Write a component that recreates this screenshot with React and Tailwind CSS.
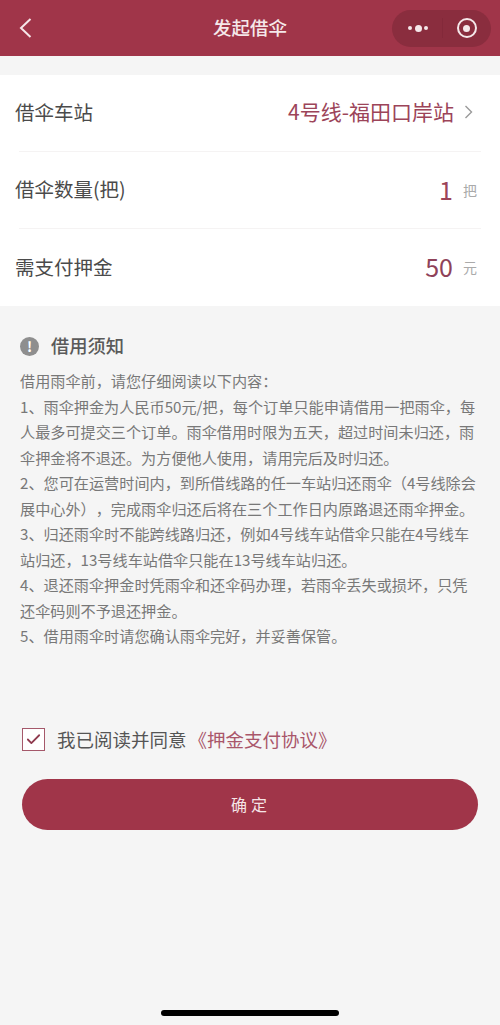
import React from 'react'
import { Check } from 'lucide-react'

const font = { fontFamily: '"Noto Sans CJK SC", "Noto Sans", sans-serif' }

const notice = [
  '借用雨伞前，请您仔细阅读以下内容：',
  '1、雨伞押金为人民币50元/把，每个订单只能申请借用一把雨伞，每',
  '人最多可提交三个订单。雨伞借用时限为五天，超过时间未归还，雨',
  '伞押金将不退还。为方便他人使用，请用完后及时归还。',
  '2、您可在运营时间内，到所借线路的任一车站归还雨伞（4号线除会',
  '展中心外），完成雨伞归还后将在三个工作日内原路退还雨伞押金。',
  '3、归还雨伞时不能跨线路归还，例如4号线车站借伞只能在4号线车',
  '站归还，13号线车站借伞只能在13号线车站归还。',
  '4、退还雨伞押金时凭雨伞和还伞码办理，若雨伞丢失或损坏，只凭',
  '还伞码则不予退还押金。',
  '5、借用雨伞时请您确认雨伞完好，并妥善保管。',
]

const Row = ({ label, children, border }) => (
  <div className={`h-[77px] flex items-center justify-between ${border ? 'border-b border-[#f5f3f3]' : ''}`}>
    <span className="text-[19.5px] text-[#4a4a4a] -ml-[4px] -mt-[2px]">{label}</span>
    {children}
  </div>
)

const App = () => {
  return (
    <div className="w-[500px] h-[1025px] bg-[#f5f5f5] relative overflow-hidden" style={font}>
      {/* Header */}
      <header className="h-[56px] bg-[#a03549] flex items-center justify-between pl-[19px] pr-[9px] relative">
        <svg width="13" height="20" viewBox="0 0 13 20" fill="none" stroke="#f6e6e9" strokeWidth="2" className="-mt-[1px]">
          <path d="M11.5 1 L2 10 L11.5 19" />
        </svg>
        <h1 className="absolute left-0 right-0 text-center text-[18.5px] font-medium text-[#f5e8ea] pointer-events-none">发起借伞</h1>
        <div className="w-[99px] h-[37px] rounded-full bg-[#8a2d3e] flex items-center">
          <div className="w-[50px] flex items-center justify-center gap-[2.5px] pl-[2px]">
            <span className="w-[4px] h-[4px] rounded-full bg-[#f5e8ea]" />
            <span className="w-[7px] h-[7px] rounded-full bg-[#f5e8ea]" />
            <span className="w-[4px] h-[4px] rounded-full bg-[#f5e8ea]" />
          </div>
          <div className="w-px h-[20px] bg-[#83293a]" />
          <div className="flex-1 flex items-center justify-center pr-[1px]">
            <div className="w-[20px] h-[20px] rounded-full border-2 border-[#f5e8ea] flex items-center justify-center">
              <span className="w-[7px] h-[7px] rounded-full bg-[#f5e8ea]" />
            </div>
          </div>
        </div>
      </header>

      {/* Form */}
      <section className="mt-[19px] bg-white h-[231px] px-[19px]">
        <Row label="借伞车站" border>
          <div className="flex items-center mr-[8px]">
            <span className="text-[21px] text-[#9c4459] -mt-[2px] whitespace-nowrap">4号线-福田口岸站</span>
            <svg width="9" height="14" viewBox="0 0 9 14" fill="none" stroke="#9a9a9a" strokeWidth="1.4" className="ml-[10px] -mt-[2px]">
              <path d="M1.5 1 L7.5 7 L1.5 13" />
            </svg>
          </div>
        </Row>
        <Row label="借伞数量(把)" border>
          <div className="flex items-center">
            <span className="text-[25px] leading-none text-[#9c4459] -mt-[1px]">1</span>
            <span className="w-[14px] text-[14px] text-[#aaaaaa] ml-[10px] mr-[4px]">把</span>
          </div>
        </Row>
        <Row label="需支付押金">
          <div className="flex items-center">
            <span className="text-[25px] leading-none text-[#8f4259] -mt-[2px]">50</span>
            <span className="w-[14px] text-[14px] text-[#aaaaaa] ml-[10px] mr-[4px]">元</span>
          </div>
        </Row>
      </section>

      {/* Notice */}
      <section className="pl-[20px] pt-[27px]">
        <div className="flex items-center gap-[12px] h-[26px]">
          <span className="w-[19px] h-[19px] rounded-full bg-[#8e8e8e] text-white text-[14px] font-bold leading-none flex items-center justify-center">!</span>
          <h2 className="text-[18.3px] font-medium text-[#5a5a5a]">借用须知</h2>
        </div>
        <div className="mt-[9px] text-[15.15px] leading-[25.5px] text-[#787878] [text-spacing-trim:space-all]">
          {notice.map((line) => (
            <p key={line} className="whitespace-nowrap">{line}</p>
          ))}
        </div>
      </section>

      {/* Agreement */}
      <div className="flex items-center ml-[22px] mt-[77px]">
        <div className="w-[23px] h-[23px] border border-[#a5586a] bg-white flex items-center justify-center">
          <Check className="w-[17px] h-[17px] text-[#8f3a4e]" strokeWidth={2.5} />
        </div>
        <span className="ml-[12px] text-[18.5px] text-[#555555] whitespace-nowrap">我已阅读并同意</span>
        <span className="ml-[2px] text-[18.5px] text-[#a9566a] whitespace-nowrap">《押金支付协议》</span>
      </div>

      {/* Submit */}
      <button className="block mx-[22px] mt-[26px] w-[456px] h-[51px] rounded-full bg-[#a03549] text-[16px] tracking-[4px] pl-[2px] pb-[2px] text-[#f5e4e7]">
        确定
      </button>

      {/* Home indicator */}
      <div className="absolute left-[161px] bottom-[9px] w-[178px] h-[6px] rounded-full bg-black" />
    </div>
  )
}

export default App
